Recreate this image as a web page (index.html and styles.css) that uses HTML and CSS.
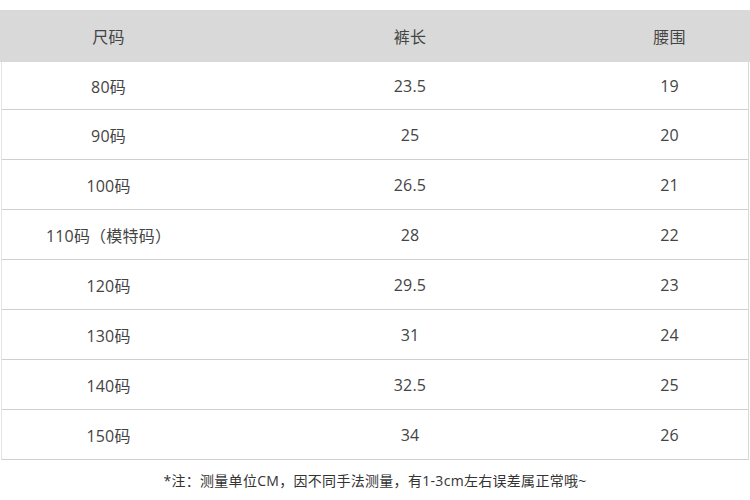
FILE: index.html
```html
<!DOCTYPE html>
<html lang="zh-CN">
<head>
<meta charset="utf-8">
<link rel="stylesheet" href="styles.css">
</head>
<body>
<div class="page">
  <div class="table">
    <div class="row head"><div class="c1">尺码</div><div class="c2">裤长</div><div class="c3">腰围</div></div>
    <div class="row"><div class="c1">80码</div><div class="c2">23.5</div><div class="c3">19</div></div>
    <div class="row"><div class="c1">90码</div><div class="c2">25</div><div class="c3">20</div></div>
    <div class="row"><div class="c1">100码</div><div class="c2">26.5</div><div class="c3">21</div></div>
    <div class="row"><div class="c1">110码（模特码）</div><div class="c2">28</div><div class="c3">22</div></div>
    <div class="row"><div class="c1">120码</div><div class="c2">29.5</div><div class="c3">23</div></div>
    <div class="row"><div class="c1">130码</div><div class="c2">31</div><div class="c3">24</div></div>
    <div class="row"><div class="c1">140码</div><div class="c2">32.5</div><div class="c3">25</div></div>
    <div class="row"><div class="c1">150码</div><div class="c2">34</div><div class="c3">26</div></div>
  </div>
  <div class="note">*注：测量单位CM，因不同手法测量，有1-3cm左右误差属正常哦~</div>
</div>
</body>
</html>
```
FILE: styles.css
```css
html, body {
  margin: 0;
  padding: 0;
  background: #fff;
}
.page {
  width: 750px;
  height: 500px;
  padding-top: 10px;
  box-sizing: border-box;
  font-family: "Open Sans", "Noto Sans CJK SC", sans-serif;
  color: #444;
}
.table {
  width: 748px;
  margin-left: 1px;
  border-left: 1px solid #e4e4e4;
  border-right: 1px solid #d8d8d8;
  box-sizing: border-box;
}
.row {
  display: grid;
  grid-template-columns: 213px 390px 1fr;
  height: 50px;
  align-items: center;
  border-bottom: 1px solid #cfcfcf;
  box-sizing: border-box;
  font-size: 16px;
  letter-spacing: 0.2px;
}
.row.head {
  height: 52px;
  background: #d9d9d9;
  border-bottom: none;
  margin-left: -2px;
  margin-right: -2px;
  padding-left: 2px;
  padding-right: 2px;
}
.row:nth-child(2) {
  height: 48px;
}
.c1, .c2, .c3 {
  text-align: center;
}
.c3 {
  padding-right: 14px;
}
.note {
  text-align: center;
  font-size: 14px;
  letter-spacing: 0.3px;
  color: #333;
  margin-top: 10px;
}
```
